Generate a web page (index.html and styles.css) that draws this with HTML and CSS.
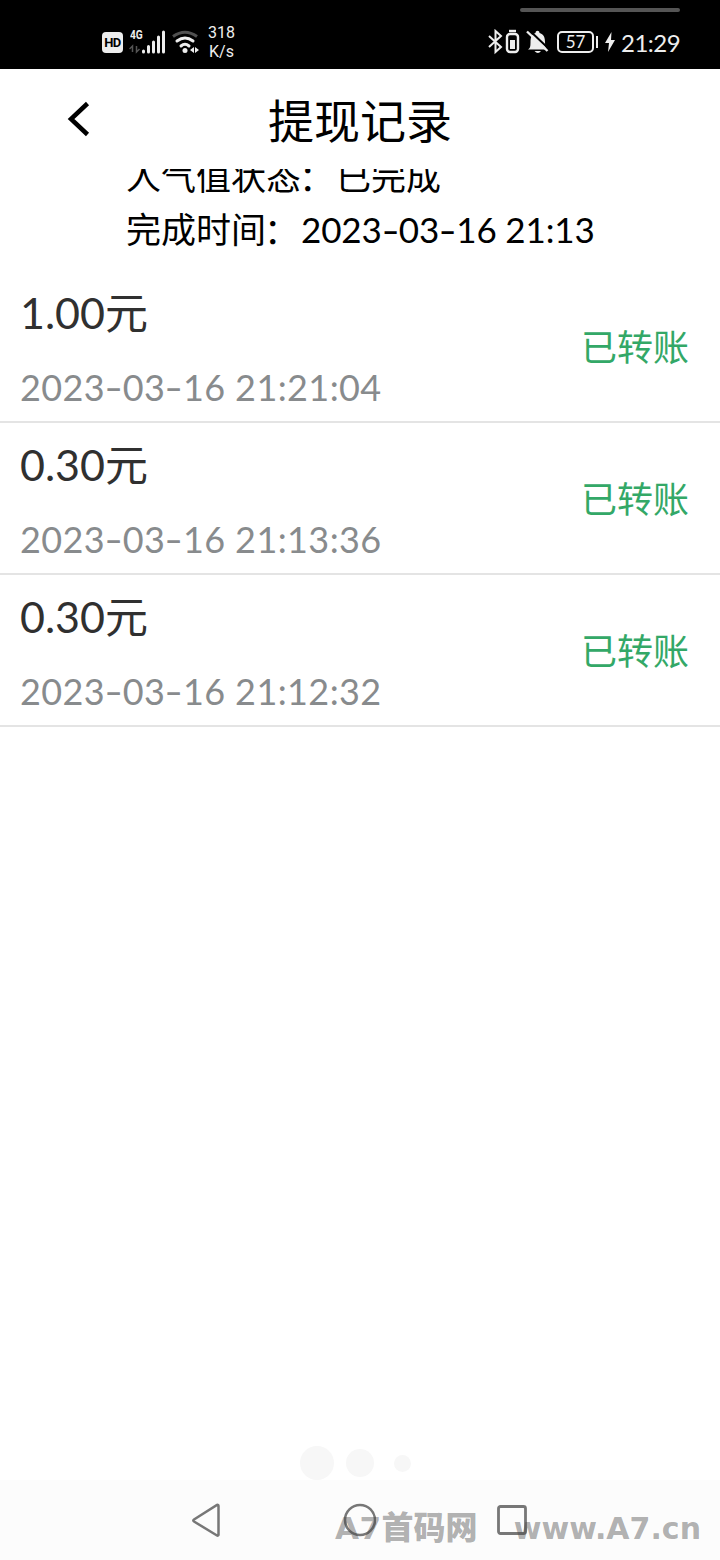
FILE: index.html
```html
<!DOCTYPE html>
<html lang="zh-CN">
<head>
    <meta charset="UTF-8">
    <meta name="viewport" content="width=device-width, initial-scale=1.0">
    <title>提现记录</title>
    <link rel="stylesheet" href="styles.css">
</head>
<body>
    <div class="status-bar">
        <div class="pull-line"></div>
        <div class="status-left">
            <span class="hd">HD</span>
            <div class="signal">
                <span class="network">4G</span>
                <svg width="38" height="26" viewBox="0 0 38 26">
                    <path d="M3.500 23v-6l-3 3M7.500 17v6l3-3" fill="none" stroke="#555" stroke-width="1.500"/>
                    <path d="M14.500 22v1M19.500 17.500v5.500M24.500 13v10M29.500 8v15M34.500 3v20" stroke="#eee" stroke-width="3" stroke-linecap="round"/>
                </svg>
            </div>
            <svg class="wifi" width="28" height="25" viewBox="0 0 28 25">
                <path d="M1 6.500Q13-2 25 6.500" stroke="#505050" stroke-width="3" fill="none"/>
                <path d="M5 11Q13 5 21 11M9 16Q13 12.500 17 16" stroke="#eee" stroke-width="3" fill="none" stroke-linecap="round"/>
                <circle cx="13" cy="20.500" r="2.500" fill="#eee"/>
                <path d="M18 20l4-3v6zM27 20l-4-3v6z" fill="#eee"/>
            </svg>
            <div class="speed">318<br>K/s</div>
        </div>
        <div class="status-right">
            <svg width="34" height="26" viewBox="0 0 34 26">
                <path d="M1 7l12 11-5.500 5V2L13 7 1 18" stroke="#eee" stroke-width="2" fill="none"/>
                <rect x="19" y="5" width="11" height="18" rx="3" stroke="#eee" stroke-width="2.400" fill="none"/>
                <path d="M21 2h7" stroke="#eee" stroke-width="2.400"/>
                <rect x="22" y="11" width="5" height="9" fill="#eee"/>
            </svg>
            <svg class="bell" width="24" height="26" viewBox="0 0 24 26">
                <path d="M2 20.500c2-1 2.500-3 2.500-7C4.500 8 6 5 9.500 4c0-3 4-3 4 0 4 1 5.500 4 5.500 9 0 4 .5 6.500 2.500 7.500zM8.500 22h6.500q-3 4-6.500 0z" fill="#eee"/>
                <path d="M3.500 1.500l20 19" stroke="#000" stroke-width="2"/>
                <path d="M1 2.500l20.500 19.500" stroke="#eee" stroke-width="2.400"/>
            </svg>
            <span class="battery">57</span>
            <svg class="bolt" width="10" height="20" viewBox="0 0 10 20">
                <path d="M6.500 0L0 11h4L3 20l7-12H6z" fill="#eee"/>
            </svg>
            <span class="clock">21:29</span>
        </div>
    </div>

    <div class="header">
        <svg class="back" width="24" height="36" viewBox="0 0 24 36">
            <path d="M20.500 2.500L4 18l16.500 15.500" stroke="#000" stroke-width="4.500" fill="none"/>
        </svg>
        <h1>提现记录</h1>
    </div>

    <div class="info">
        <div>人气值状态<span class="colon">：</span>已完成</div>
        <div>完成时间<span class="colon">：</span><span class="info-date">2023<i class="dash">-</i>03<i class="dash">-</i>16 21:13</span></div>
    </div>

    <div class="list">
        <div class="record">
            <div>
                <div class="amount">1.00元</div>
                <div class="date">2023<i class="dash">-</i>03<i class="dash">-</i>16 21:21:04</div>
            </div>
            <div class="state">已转账</div>
        </div>
        <div class="record">
            <div>
                <div class="amount">0.30元</div>
                <div class="date">2023<i class="dash">-</i>03<i class="dash">-</i>16 21:13:36</div>
            </div>
            <div class="state">已转账</div>
        </div>
        <div class="record">
            <div>
                <div class="amount">0.30元</div>
                <div class="date">2023<i class="dash">-</i>03<i class="dash">-</i>16 21:12:32</div>
            </div>
            <div class="state">已转账</div>
        </div>
    </div>

    <div class="dots">
        <span class="dot big"></span>
        <span class="dot middle"></span>
        <span class="dot small"></span>
    </div>

    <div class="nav-bar">
        <svg width="30" height="34" viewBox="0 0 30 34">
            <path d="M27.500 3v28.500a1 1 0 0 1-1.500 1L3 18.500q-1.500-1 0-2L26 2q1.500-.5 1.500 1z" stroke="#777" stroke-width="2.500" fill="none"/>
        </svg>
        <svg width="34" height="34" viewBox="0 0 34 34">
            <circle cx="18" cy="17" r="15" stroke="#777" stroke-width="2.500" fill="none"/>
        </svg>
        <svg width="30" height="30" viewBox="0 0 30 30">
            <rect x="1.500" y="1.500" width="27" height="27" rx="2" stroke="#777" stroke-width="2.800" fill="none"/>
        </svg>
        <div class="watermark">
            <span class="mark-name"><b>A7</b>首码网</span>
            <span class="mark-url">www.A7.cn</span>
        </div>
    </div>
</body>
</html>
```
FILE: styles.css
```css
body {
    margin: 0;
    height: 1560px;
    display: flex;
    flex-direction: column;
    overflow: hidden;
    background: #fff;
    color: #000;
    font-family: Lato, "Noto Sans CJK SC", sans-serif;
}
svg {
    display: block;
    flex: none;
}
.status-bar {
    position: relative;
    height: 69px;
    flex: none;
    box-sizing: border-box;
    padding: 15px 40px 0 102px;
    display: flex;
    justify-content: space-between;
    align-items: center;
    background: #000;
    color: #eee;
}
.pull-line {
    position: absolute;
    top: 8px;
    right: 40px;
    width: 160px;
    height: 4px;
    border-radius: 2px;
    background: #555;
}
.status-left, .status-right {
    display: flex;
    align-items: center;
}
.hd {
    width: 21px;
    height: 21px;
    border-radius: 4px;
    background: #eee;
    color: #000;
    font: bold 13px/21px Roboto, sans-serif;
    text-align: center;
    letter-spacing: -0.5px;
}
.signal {
    position: relative;
    margin-left: 6px;
}
.network {
    position: absolute;
    top: -1px;
    left: 1px;
    font: bold 13px/14px Roboto, sans-serif;
    transform: scaleX(0.78);
    transform-origin: left;
}
.wifi {
    margin-left: 5px;
}
.speed {
    margin-left: 8px;
    font: 16px/19px Roboto, sans-serif;
    text-align: center;
}
.bell {
    margin-left: 4px;
}
.battery {
    position: relative;
    box-sizing: border-box;
    width: 37px;
    height: 22px;
    margin-left: 7px;
    border: 2px solid #eee;
    border-radius: 5px;
    font-size: 17px;
    line-height: 18px;
    text-align: center;
}
.battery::after {
    content: "";
    position: absolute;
    top: 3px;
    right: -6px;
    width: 2px;
    height: 12px;
    background: #eee;
}
.bolt {
    margin-left: 11px;
}
.clock {
    margin-left: 6px;
    width: 59px;
    padding-top: 2px;
    font-size: 24px;
    line-height: 28px;
    letter-spacing: -0.5px;
    white-space: nowrap;
}
.header {
    height: 100px;
    flex: none;
    display: grid;
    grid-template-columns: 91px 1fr 91px;
    align-items: center;
}
.back {
    justify-self: end;
}
h1 {
    margin: 0;
    padding-top: 4px;
    text-align: center;
    font-size: 46px;
    line-height: 60px;
    font-weight: 400;
}
.info {
    height: 102px;
    flex: none;
    box-sizing: border-box;
    padding-left: 126px;
    display: flex;
    flex-direction: column;
    justify-content: flex-end;
    gap: 1px;
    overflow: hidden;
    padding-bottom: 16px;
    font-size: 35px;
    line-height: 52px;
    white-space: nowrap;
}
.info-date {
    letter-spacing: -0.15px;
}
.colon {
    display: inline-block;
    line-height: 1;
    transform: translate(-2px, 1px);
}
/* wide hyphen inside dates */
.dash {
    display: inline-block;
    width: 0.49em;
    text-align: center;
    font-style: normal;
    transform: scaleX(1.4);
}
.record {
    height: 152px;
    box-sizing: border-box;
    padding: 14px 30px 0 20px;
    border-bottom: 2px solid #e4e4e4;
    display: flex;
    justify-content: space-between;
}
.amount {
    font-size: 43px;
    line-height: 56px;
    color: #303030;
}
.date {
    margin-top: 22px;
    font-size: 36px;
    line-height: 48px;
    letter-spacing: 0.4px;
    color: #888b8d;
}
.state {
    margin-top: 37px;
    margin-right: 1px;
    font-size: 36px;
    line-height: 50px;
    color: #33a867;
}
.dots {
    margin-top: auto;
    height: 34px;
    flex: none;
    display: flex;
    align-items: center;
    padding-left: 300px;
}
.dot {
    border-radius: 50%;
    background: #f7f7f7;
}
.big {
    width: 34px;
    height: 34px;
}
.middle {
    width: 28px;
    height: 28px;
    margin-left: 12px;
}
.small {
    width: 17px;
    height: 17px;
    margin-left: 20px;
}
.nav-bar {
    position: relative;
    height: 80px;
    flex: none;
    box-sizing: border-box;
    padding: 0 193px 0 191px;
    display: flex;
    justify-content: space-between;
    align-items: center;
    background: #fcfcfc;
}
.watermark {
    position: absolute;
    left: 335px;
    top: 29px;
    width: 366px;
    display: flex;
    justify-content: space-between;
    color: rgba(70, 70, 70, 0.43);
    line-height: 36px;
    font-weight: 900;
    white-space: nowrap;
}
.mark-name {
    font-size: 32px;
}
.mark-name b {
    font-family: "DejaVu Sans", sans-serif;
    font-size: 31px;
    letter-spacing: 0.5px;
}
.mark-url {
    margin-top: 2px;
    font: bold 30px/36px "DejaVu Sans", sans-serif;
}
```
